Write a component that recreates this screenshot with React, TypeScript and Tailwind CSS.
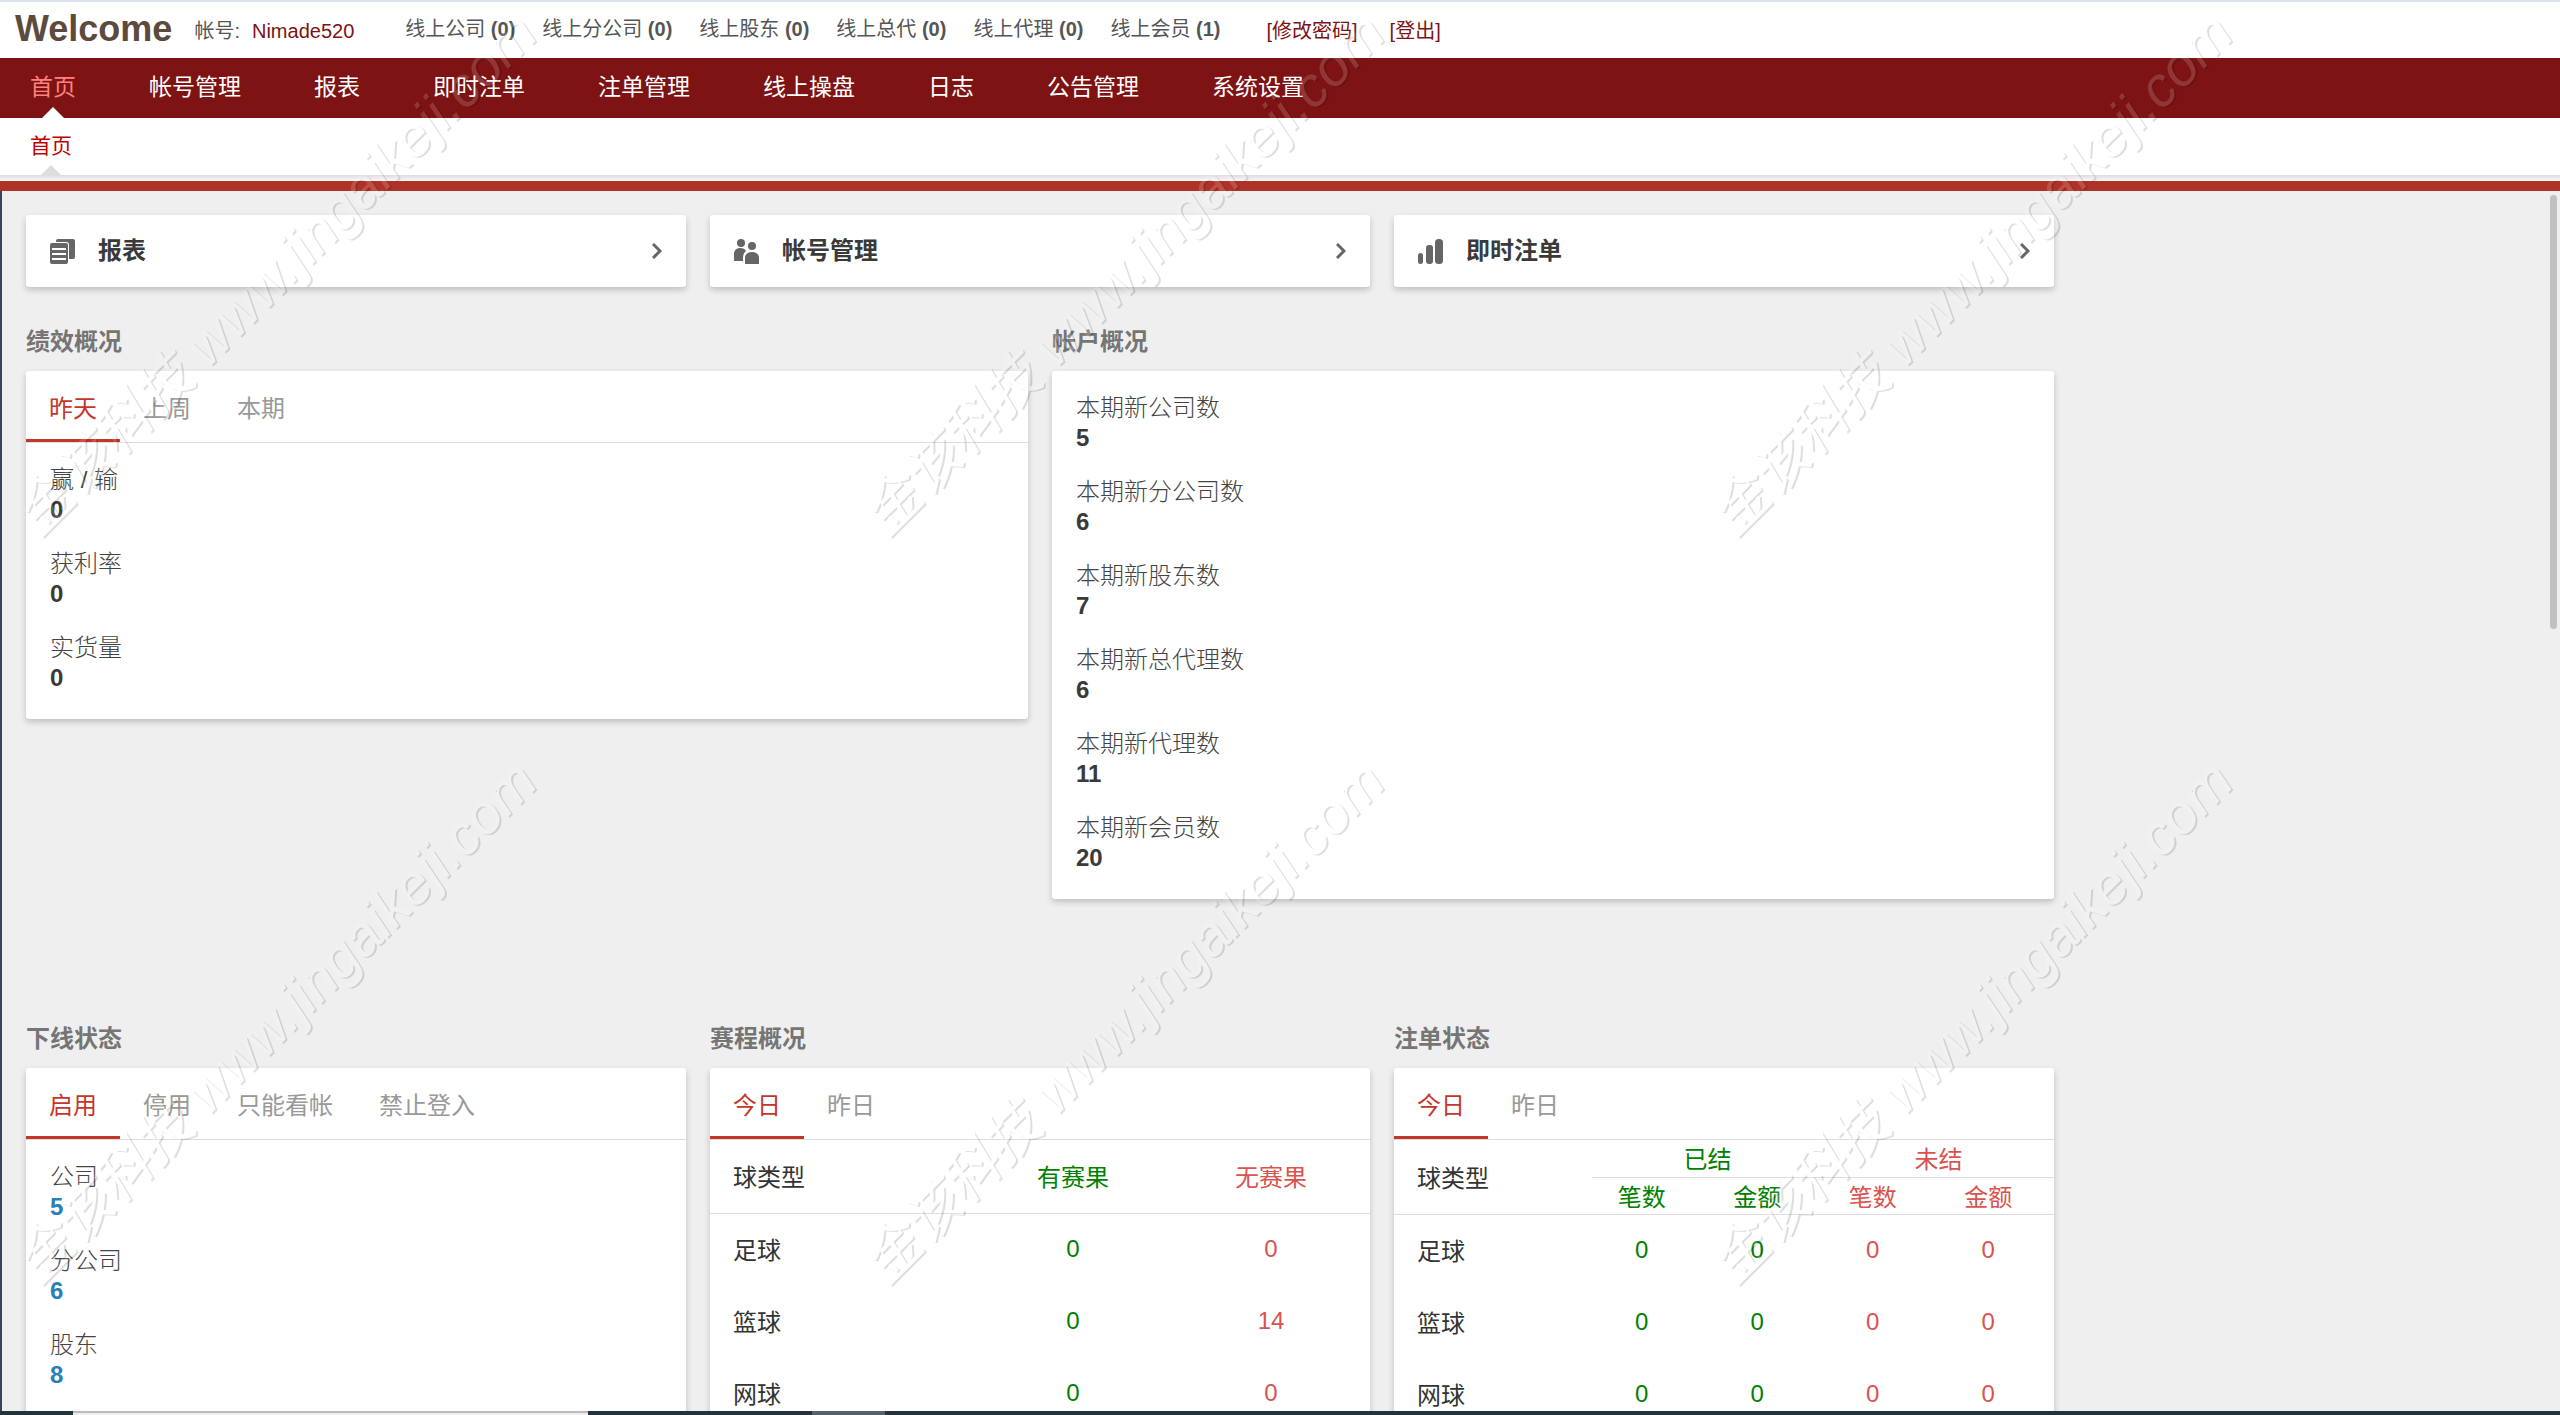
import { useState, type ReactNode } from 'react'
import { clsx } from 'clsx'

const NAV = ['首页', '帐号管理', '报表', '即时注单', '注单管理', '线上操盘', '日志', '公告管理', '系统设置']

const ONLINE = [
  { label: '线上公司',   count: 0 },
  { label: '线上分公司', count: 0 },
  { label: '线上股东',   count: 0 },
  { label: '线上总代',   count: 0 },
  { label: '线上代理',   count: 0 },
  { label: '线上会员',   count: 1 },
]

const PERFORMANCE = [
  { label: '赢 / 输', value: 0 },
  { label: '获利率',  value: 0 },
  { label: '实货量',  value: 0 },
]

const ACCOUNTS = [
  { label: '本期新公司数',   value: 5 },
  { label: '本期新分公司数', value: 6 },
  { label: '本期新股东数',   value: 7 },
  { label: '本期新总代理数', value: 6 },
  { label: '本期新代理数',   value: 11 },
  { label: '本期新会员数',   value: 20 },
]

const DOWNLINE = [
  { label: '公司',   value: 5 },
  { label: '分公司', value: 6 },
  { label: '股东',   value: 8 },
]

const SCHEDULE = [
  { sport: '足球', done: 0, open: 0 },
  { sport: '篮球', done: 0, open: 14 },
  { sport: '网球', done: 0, open: 0 },
]

const BETS = [
  { sport: '足球', cells: [0, 0, 0, 0] },
  { sport: '篮球', cells: [0, 0, 0, 0] },
  { sport: '网球', cells: [0, 0, 0, 0] },
]

// ─── 图标 ─────────────────────────────────────────────────────────────────────

function ReportIcon() {
  return (
    <svg width="25" height="25" viewBox="0 0 25 25" fill="#666">
      <path d="M8 0h15a2 2 0 0 1 2 2v16a2 2 0 0 1-2 2h-4V6a3 3 0 0 0-3-3H6V2a2 2 0 0 1 2-2z" />
      <path
        fillRule="evenodd"
        d="M2 4h14a2 2 0 0 1 2 2v17a2 2 0 0 1-2 2H2a2 2 0 0 1-2-2V6a2 2 0 0 1 2-2zm0 5v2h14V9zm0 5v2h14v-2zm0 5v2h14v-2z"
      />
    </svg>
  )
}

function PeopleIcon() {
  return (
    <svg width="25" height="25" viewBox="0 0 25 25" fill="#666">
      <circle cx="7" cy="4" r="4" />
      <path d="M0 22v-7c0-4 3-6 6-6 3 0 5 1 6 3-2 2-3 4-3 7v3z" />
      <circle cx="18" cy="7" r="4" />
      <path d="M11 25v-6c0-4 3-6 7-6s7 2 7 6v6z" />
    </svg>
  )
}

function ChartIcon() {
  return (
    <svg width="25" height="25" viewBox="0 0 25 25" fill="#666">
      <rect x="0" y="14" width="5" height="11" rx="2.5" />
      <rect x="8" y="6" width="7" height="19" rx="3" />
      <rect x="17" y="0" width="8" height="25" rx="3.5" />
    </svg>
  )
}

function ChevronIcon() {
  return (
    <svg width="10" height="16" viewBox="0 0 10 16" fill="none" stroke="#666" strokeWidth="3">
      <path d="M1 1l7 7-7 7" />
    </svg>
  )
}

const SHORTCUTS = [
  { label: '报表',     icon: <ReportIcon /> },
  { label: '帐号管理', icon: <PeopleIcon /> },
  { label: '即时注单', icon: <ChartIcon /> },
]

// ─── 共用组件 ─────────────────────────────────────────────────────────────────

function Section({ title, children }: { title: string; children: ReactNode }) {
  return (
    <section>
      <h2 className="mb-[14px] text-[24px] leading-[30px] font-bold text-[#757575]">{title}</h2>
      <div className="rounded-[3px] bg-white shadow-[0_3px_6px_rgba(0,0,0,0.2)]">{children}</div>
    </section>
  )
}

function Tabs({ items }: { items: string[] }) {
  const [active, setActive] = useState(0)
  return (
    <div role="tablist" className="flex h-[72px] border-b border-[#ddd]">
      {items.map((item, i) => (
        <button
          key={item}
          role="tab"
          aria-selected={i === active}
          onClick={() => setActive(i)}
          className={clsx(
            'border-b-[3px] px-[23px] pt-2 text-[24px]',
            i === active ? 'border-[#c5362a] text-[#c5362a]' : 'border-transparent text-[#999]',
          )}
        >
          {item}
        </button>
      ))}
    </div>
  )
}

function StatList({ items, link }: { items: { label: string; value: number }[]; link?: boolean }) {
  return (
    <dl className="flex flex-col gap-6 px-6 pt-[22px] pb-[26px]">
      {items.map(item => (
        <div key={item.label} className="text-[24px] leading-[30px]">
          <dt className="font-light text-[#444]">{item.label}</dt>
          <dd className="font-bold text-[#3a3a3a]">
            {link ? <a href="#" className="text-[#2980b9]">{item.value}</a> : item.value}
          </dd>
        </div>
      ))}
    </dl>
  )
}

// ─── 页头 ─────────────────────────────────────────────────────────────────────

function Header() {
  return (
    <header className="bg-white">
      <div className="flex h-[58px] items-center border-t-2 border-[#dde3ec] pb-0.5 pl-[15px] text-[20px] text-[#555]">
        <h1 className="text-[36px] leading-[50px] font-bold text-[#5c4a3e]">Welcome</h1>
        <p className="ml-[22px] flex pt-1">
          帐号:<span className="ml-3 text-[#7d1313]">Nimade520</span>
        </p>
        <ul className="ml-[51px] flex gap-[27px]">
          {ONLINE.map(item => (
            <li key={item.label}>
              {item.label} <b>({item.count})</b>
            </li>
          ))}
        </ul>
        <div className="ml-[46px] flex gap-8 pt-1 text-[#7d1313]">
          <a href="#">[修改密码]</a>
          <a href="#">[登出]</a>
        </div>
      </div>

      <nav className="flex h-[60px] items-stretch gap-[73px] bg-[#7d1313] pl-[30px] text-[23px]">
        {NAV.map((item, i) => (
          <a
            key={item}
            href="#"
            className={clsx('relative flex items-center pb-0.5', i === 0 ? 'text-[#ff8080]' : 'text-white')}
          >
            {item}
            {i === 0 && (
              <span className="absolute bottom-0 left-1/2 -translate-x-1/2 border-x-[11px] border-b-[11px] border-x-transparent border-b-white" />
            )}
          </a>
        ))}
      </nav>

      <div className="flex h-[57px] pl-[30px] text-[21px]">
        <a href="#" className="relative flex items-center pb-0.5 text-[#c00000]">
          首页
          <span className="absolute bottom-0 left-1/2 -translate-x-1/2 border-x-[10px] border-b-[10px] border-x-transparent border-b-[#ddd]" />
        </a>
      </div>
      <div className="h-[6px] bg-linear-to-b from-[#dcdcdc] to-[#fafafa]" />
      <div className="h-[10px] bg-[#ae3228]" />
    </header>
  )
}

// ─── 表格 ─────────────────────────────────────────────────────────────────────

function ScheduleTable() {
  return (
    <table className="w-full table-fixed text-[24px] text-[#333]">
      <colgroup>
        <col className="w-[40%]" />
        <col className="w-[30%]" />
        <col className="w-[30%]" />
      </colgroup>
      <thead>
        <tr className="h-[73px] border-b border-[#ddd]">
          <th className="pt-1 pl-[23px] text-left font-normal">球类型</th>
          <th className="pt-1 font-normal text-[#008000]">有赛果</th>
          <th className="pt-1 font-normal text-[#d9534f]">无赛果</th>
        </tr>
      </thead>
      <tbody>
        {SCHEDULE.map(row => (
          <tr key={row.sport} className="h-[72px] text-center">
            <td className="pt-1 pl-[23px] text-left">{row.sport}</td>
            <td className="text-[#008000]">{row.done}</td>
            <td className="text-[#d9534f]">{row.open}</td>
          </tr>
        ))}
      </tbody>
    </table>
  )
}

function BetTable() {
  return (
    <table className="w-full table-fixed text-[24px] leading-[30px] text-[#333]">
      <colgroup>
        <col className="w-[30%]" />
        <col span={4} />
      </colgroup>
      <thead>
        <tr className="h-[37px]">
          <th rowSpan={2} className="border-b border-[#ddd] pt-1 pl-[23px] text-left font-normal">球类型</th>
          <th colSpan={2} className="border-b border-[#ddd] pt-1 font-normal text-[#008000]">已结</th>
          <th colSpan={2} className="border-b border-[#ddd] pt-1 font-normal text-[#d9534f]">未结</th>
        </tr>
        <tr className="h-[37px] border-b border-[#ddd]">
          <th className="pt-1 pr-4 font-normal text-[#008000]">笔数</th>
          <th className="pt-1 pr-4 font-normal text-[#008000]">金额</th>
          <th className="pt-1 pr-4 font-normal text-[#d9534f]">笔数</th>
          <th className="pt-1 pr-4 font-normal text-[#d9534f]">金额</th>
        </tr>
      </thead>
      <tbody>
        {BETS.map(row => (
          <tr key={row.sport} className="h-[72px] text-center">
            <td className="pt-1 pl-[23px] text-left">{row.sport}</td>
            {row.cells.map((cell, i) => (
              <td key={i} className={clsx('pr-4', i < 2 ? 'text-[#008000]' : 'text-[#d9534f]')}>{cell}</td>
            ))}
          </tr>
        ))}
      </tbody>
    </table>
  )
}

// ─── 水印 ─────────────────────────────────────────────────────────────────────

function Watermark() {
  return (
    <div aria-hidden="true" className="pointer-events-none absolute inset-0 overflow-hidden">
      {/* 浮雕：半透明白色字面 + 右下方细阴影 */}
      <svg className="absolute h-0 w-0">
        <filter id="emboss" x="0" y="0" width="100%" height="100%" colorInterpolationFilters="sRGB">
          <feOffset in="SourceAlpha" dx="2" dy="1" result="moved" />
          <feGaussianBlur in="moved" stdDeviation="0.6" result="soft" />
          <feComposite in="soft" in2="SourceAlpha" operator="out" result="edge" />
          <feComponentTransfer in="edge" result="shade">
            <feFuncA type="linear" slope="0.13" />
          </feComponentTransfer>
          <feComponentTransfer in="SourceGraphic" result="face">
            <feFuncA type="linear" slope="0.15" />
          </feComponentTransfer>
          <feMerge>
            <feMergeNode in="shade" />
            <feMergeNode in="face" />
          </feMerge>
        </filter>
      </svg>
      <div className="grid h-full auto-rows-[748px] grid-cols-[repeat(3,848px)] text-[56px] whitespace-nowrap text-white italic [filter:url(#emboss)]">
        {[0, 1, 2, 3, 4, 5].map(i => (
          <span key={i} className="flex h-[548px] w-[552px] items-center justify-center">
            <span className="-rotate-45">金该科技 www.jingaikeji.com</span>
          </span>
        ))}
      </div>
    </div>
  )
}

// ─── 页面 ─────────────────────────────────────────────────────────────────────

export default function App() {
  return (
    <div className="relative flex h-screen flex-col overflow-hidden bg-[#efefef] font-['Liberation_Sans','Noto_Sans_CJK_SC',sans-serif]">
      <Header />

      <div className="flex min-h-0 flex-1 border-l-2 border-[#36445c]">
        <main className="min-w-0 flex-1 overflow-hidden px-6 pt-6">
          <div className="max-w-[2028px]">
            <div className="grid grid-cols-3 gap-6">
              {SHORTCUTS.map(item => (
                <a
                  key={item.label}
                  href="#"
                  className="flex h-[72px] items-center rounded-[3px] bg-white px-6 text-[24px] font-bold text-[#3a3a3a] shadow-[0_3px_6px_rgba(0,0,0,0.2)]"
                >
                  {item.icon}
                  <span className="ml-[23px] flex-1">{item.label}</span>
                  <ChevronIcon />
                </a>
              ))}
            </div>

            <div className="mt-10 grid grid-cols-2 items-start gap-6">
              <Section title="绩效概况">
                <Tabs items={['昨天', '上周', '本期']} />
                <StatList items={PERFORMANCE} />
              </Section>
              <Section title="帐户概况">
                <StatList items={ACCOUNTS} />
              </Section>
            </div>

            <div className="mt-[125px] grid grid-cols-3 items-start gap-6">
              <Section title="下线状态">
                <Tabs items={['启用', '停用', '只能看帐', '禁止登入']} />
                <StatList items={DOWNLINE} link />
              </Section>
              <Section title="赛程概况">
                <Tabs items={['今日', '昨日']} />
                <ScheduleTable />
              </Section>
              <Section title="注单状态">
                <Tabs items={['今日', '昨日']} />
                <BetTable />
              </Section>
            </div>
          </div>
        </main>
        <div className="w-[10px] pt-1">
          <div className="h-[434px] w-[7px] rounded-full bg-[#c1c1c1]" />
        </div>
      </div>

      {/* 任务栏边缘 */}
      <div className="flex h-1 bg-[#22333b]">
        <div className="ml-[73px] w-[515px] border-t-2 border-[#bbb] bg-[#eee]" />
        <div className="ml-[224px] w-[73px] bg-[#55626a]" />
      </div>

      <Watermark />
    </div>
  )
}
